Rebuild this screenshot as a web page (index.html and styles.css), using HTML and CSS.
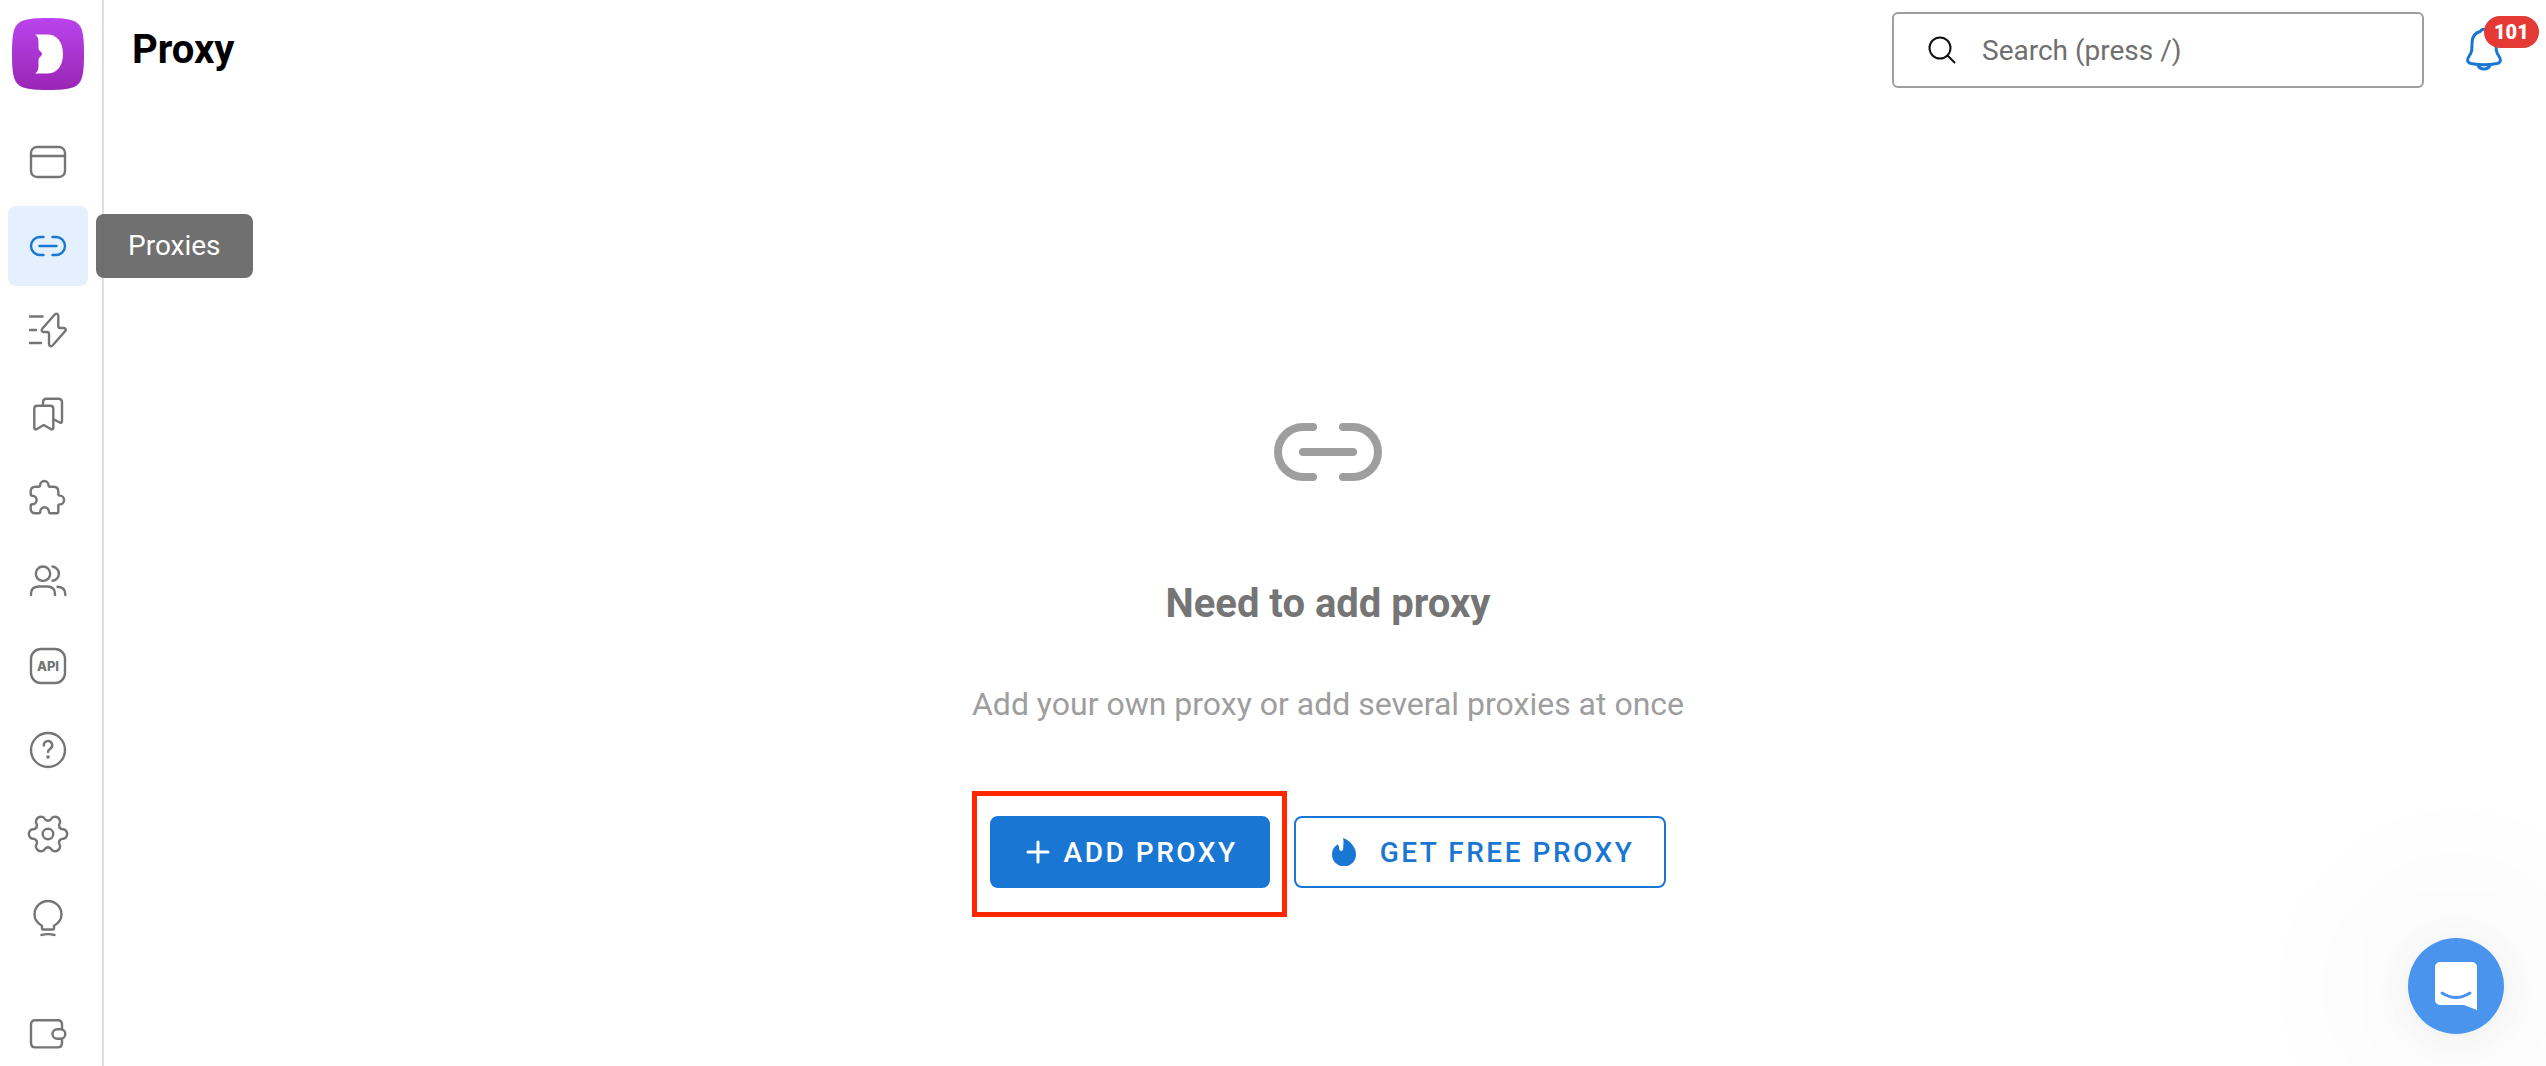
FILE: index.html
```html
<!DOCTYPE html>
<html lang="en">
<head>
  <meta charset="UTF-8" />
  <meta name="viewport" content="width=device-width, initial-scale=1.0"/>
  <title>Proxy</title>
  <link rel="stylesheet" href="styles.css">
</head>
<body>

  <!-- Sidebar -->
  <aside class="sidebar">
    <a class="logo" href="#" aria-label="Home">
      <svg viewBox="0 0 72 72">
        <defs>
          <linearGradient id="logoFill" x1="0" y1="0" x2="0" y2="1">
            <stop offset="0" stop-color="#b944ee"/>
            <stop offset="1" stop-color="#9a25b4"/>
          </linearGradient>
        </defs>
        <path fill="url(#logoFill)" d="M36 0C48 0 58 .5 64 4C71 8.500 72 18 72 36S71 63.500 64 68C58 71.500 48 72 36 72S14 71.500 8 68C1 63.500 0 54 0 36S1 8.500 8 4C14 .5 24 0 36 0z"/>
        <path fill="#fff" d="M23 16.500H35C45 16.500 51 24 51 36S45 55.500 35 55.500H23C26 53.500 26.500 51 26.500 47V42C26.500 39 30 38.500 30 36S26.500 33 26.500 30V25C26.500 21 26 18.500 23 16.500z"/>
      </svg>
    </a>

    <nav class="menu">
      <a class="menu-item" href="#profiles" aria-label="Browser profiles">
        <svg class="icon" viewBox="0 0 48 48"><rect x="7" y="9" width="34" height="30" rx="6"/><path d="M7 18h34"/></svg>
      </a>
      <a class="menu-item active" href="#proxies" aria-label="Proxies">
        <svg class="icon" viewBox="0 0 48 48"><path d="M19.500 15H16a9 9 0 0 0 0 18h3.500M28.500 15H32a9 9 0 0 1 0 18h-3.500M15.500 24h17"/></svg>
        <span class="tooltip">Proxies</span>
      </a>
      <a class="menu-item" href="#scripts" aria-label="Scripts">
        <svg class="icon" viewBox="0 0 48 48"><path d="M6 10.500h12.500M6 24h6M6 37h11M31 8.300c1.300-1.300 3.300-.5 3.300 1.400V20c0 1.200.8 2 2 2h3.500c1.800 0 2.600 1.700 1.500 3L28.500 39.500c-1.400 1.400-3.500.6-3.500-1.400V28c0-1.200-.7-2-2-2h-3.300c-1.800 0-2.700-1.800-1.500-3.200z"/></svg>
      </a>
      <a class="menu-item" href="#bookmarks" aria-label="Bookmarks">
        <svg class="icon" viewBox="0 0 48 48"><path d="M13.300 15.800h13c1.800 0 3 1.200 3 3V38c0 1.200-1.200 1.800-2.200 1.200L19.800 35l-7.300 4.200c-1 .6-2.200 0-2.200-1.200V18.800c0-1.800 1.200-3 3-3zM19 15.500v-3.200c0-2.200 1.300-3.500 3.500-3.500h12c2.200 0 3.500 1.300 3.500 3.500v19c0 1.200-1.200 1.900-2.200 1.200L30 29.500"/></svg>
      </a>
      <a class="menu-item" href="#extensions" aria-label="Extensions">
        <svg class="icon" viewBox="0 0 48 48"><path d="M11.500 12.700h3c1 0 1.600-.6 1.600-1.500a4.200 4.200 0 0 1 8.400 0c0 .9.600 1.500 1.600 1.500h3.400c3 0 4.800 1.800 4.800 4.800v2.600c0 1 .6 1.500 1.400 1.500a4.200 4.200 0 0 1 0 8.800c-.8 0-1.400.6-1.400 1.500v5.900c0 1-.6 1.500-1.500 1.500h-6.300c-1 0-1.600-.6-1.600-1.700a4.300 4.300 0 0 0-8.600 0c0 1.100-.6 1.700-1.600 1.700h-3.200c-3 0-4.800-1.800-4.800-4.800V31.800c0-1 .6-1.500 1.600-1.500a4.200 4.200 0 0 0 0-8.600c-1 0-1.600-.6-1.600-1.500v-2.700c0-3 1.800-4.800 4.800-4.800z"/></svg>
      </a>
      <a class="menu-item" href="#team" aria-label="Team">
        <svg class="icon" viewBox="0 0 48 48"><circle cx="19" cy="15.700" r="7.200"/><path d="M28.500 8.500a7.200 7.200 0 0 1 0 14.300M7 37v-1c0-5 3-7.500 8-7.500h8c5 0 8 2.500 8 7.500v1M33.500 28.700c5.500.3 7.700 3 7.800 7.300v1"/></svg>
      </a>
      <a class="menu-item" href="#api" aria-label="API">
        <svg class="icon" viewBox="0 0 48 48"><rect x="7" y="7" width="34" height="34" rx="10"/><text class="icon-text" x="24" y="29" text-anchor="middle">API</text></svg>
      </a>
      <a class="menu-item" href="#help" aria-label="Help">
        <svg class="icon" viewBox="0 0 48 48"><circle cx="24" cy="24" r="17"/><path d="M19.800 19.500a4.200 4.200 0 1 1 6.300 3.400c-1.300.8-2.100 1.600-2.100 3"/><circle class="fill" cx="24" cy="31" r="1.800"/></svg>
      </a>
      <a class="menu-item" href="#settings" aria-label="Settings">
        <svg class="icon" viewBox="0 0 48 48">
          <defs>
            <path id="tooth" d="M0-13.300C2-13.300 3-14.500 3.500-15.500C4.200-17.100 7.400-17.900 9.600-16.600S12.700-12.200 11.700-10.800C11.100-9.900 10.500-8.400 11.500-6.650"/>
          </defs>
          <g transform="translate(24 24)">
            <circle r="5.300"/>
            <use href="#tooth"/>
            <use href="#tooth" transform="rotate(60)"/>
            <use href="#tooth" transform="rotate(120)"/>
            <use href="#tooth" transform="rotate(180)"/>
            <use href="#tooth" transform="rotate(240)"/>
            <use href="#tooth" transform="rotate(300)"/>
          </g>
        </svg>
      </a>
      <a class="menu-item" href="#ideas" aria-label="Ideas">
        <svg class="icon" viewBox="0 0 48 48"><path d="M18 34.500v-2.800c-4.500-2.500-7.500-6.500-7.500-11.200a13.500 13.500 0 0 1 27 0c0 4.700-3 8.700-7.500 11.200v2.800c0 .6-.4 1-1 1H19c-.6 0-1-.4-1-1zM17.500 41q6.500-1.800 13 0"/></svg>
      </a>
      <a class="menu-item wallet" href="#wallet" aria-label="Wallet">
        <svg class="icon" viewBox="0 0 48 48"><path d="M38 19v-4.500c0-2.800-1.600-4.300-4.300-4.300H11.300C8.600 10.200 7 11.700 7 14.500v18.600c0 2.800 1.600 4.300 4.300 4.300h22.400c2.700 0 4.300-1.500 4.300-4.300V29"/><rect x="28.500" y="19.200" width="12.800" height="9.600" rx="4.800"/></svg>
      </a>
    </nav>
  </aside>

  <!-- Page -->
  <main class="page">
    <header class="topbar">
      <h1>Proxy</h1>
      <label class="search">
        <svg class="search-icon" viewBox="0 0 28 28"><circle cx="12" cy="12" r="10.500"/><path d="M19.500 19.500l7.500 7.500"/></svg>
        <input type="text" placeholder="Search (press /)" aria-label="Search">
      </label>
      <button class="bell" type="button" aria-label="Notifications">
        <svg viewBox="0 0 36 44"><path d="M18 1c-2 0-3 1.500-3.500 2.300C9 4.800 6 9 6 15c0 6.500 0 9-2.800 13C.6 32 1.200 34.500 5 35.500c7 1.300 19 1.300 26 0 3.800-1 4.400-3.500 1.800-7.500C30 24 30 21.500 30 15c0-6-3-10.200-8.500-11.700C21 2.500 20 1 18 1zM12 37c1.500 5.300 10.500 5.300 12 0"/></svg>
        <span class="badge">101</span>
      </button>
    </header>

    <section class="empty">
      <svg class="empty-icon" viewBox="0 0 144 144"><path d="M57 47H47a25 25 0 0 0 0 50h10M87 47h10a25 25 0 0 1 0 50H87M47 72h50"/></svg>
      <h2>Need to add proxy</h2>
      <p>Add your own proxy or add several proxies at once</p>
      <div class="actions">
        <button class="btn btn-primary" type="button">
          <svg class="plus" viewBox="0 0 24 24"><path d="M12 2v20M2 12h20"/></svg>
          ADD PROXY
        </button>
        <button class="btn btn-outline" type="button">
          <svg class="flame" viewBox="0 0 24 28"><path d="M11 0C18 2.500 24 9 24 16.500a12 12 0 0 1-24 0C0 12 2 8.500 5.800 6.200c1 1.200 1.200 2.800 1.300 4.300.1 1.500 1 2.500 2.200 2.500s1.900-1 1.900-2.500C11.200 7 12 3.500 11 0z"/></svg>
          GET FREE PROXY
        </button>
      </div>
    </section>
  </main>

  <!-- Chat launcher -->
  <button class="chat" type="button" aria-label="Open chat">
    <svg viewBox="0 0 42 48"><path class="bubble" d="M5 0h32a5 5 0 0 1 5 5v43l-13-5H5a5 5 0 0 1-5-5V5a5 5 0 0 1 5-5z"/><path class="smile" d="M7 31q14 9 28 0"/></svg>
  </button>

</body>
</html>
```

FILE: styles.css
```css
* {
  box-sizing: border-box;
}
body {
  margin: 0;
  height: 100vh;
  display: flex;
  overflow: hidden;
  font-family: Roboto, sans-serif;
  background: #fff;
  color: #000;
}
button {
  font-family: inherit;
  cursor: pointer;
}
svg {
  display: block;
}

/* sidebar */
.sidebar {
  flex: none;
  width: 104px;
  padding: 18px 8px 0;
  border-right: 2px solid #e0e0e0;
}
.logo {
  display: block;
  width: 72px;
  margin: 0 4px 32px;
}
.menu {
  display: flex;
  flex-direction: column;
  gap: 4px;
}
.menu-item {
  position: relative;
  display: flex;
  align-items: center;
  justify-content: center;
  width: 80px;
  height: 80px;
  border-radius: 8px;
  color: #757575;
}
.menu-item.active {
  background: #e4f0fd;
  color: #1976d2;
}
.wallet {
  margin-top: 32px;
}
.icon {
  width: 48px;
  height: 48px;
  fill: none;
  stroke: currentColor;
  stroke-width: 2.4;
  stroke-linecap: round;
  stroke-linejoin: round;
}
.icon .fill {
  fill: currentColor;
  stroke: none;
}
.icon-text {
  font: 800 13px Inter, sans-serif;
  fill: currentColor;
  stroke: none;
}
.tooltip {
  position: absolute;
  left: 88px;
  top: 8px;
  padding: 0 32px;
  border-radius: 8px;
  background: rgba(97, 97, 97, 0.9);
  color: #fff;
  font-size: 28px;
  line-height: 64px;
  z-index: 1;
}

/* page */
.page {
  flex: 1;
  padding: 12px 22px 0 28px;
}
.topbar {
  display: flex;
  align-items: center;
  height: 76px;
}
h1 {
  margin: 0 auto 0 0;
  font-size: 40px;
  line-height: 48px;
}
.search {
  display: flex;
  align-items: center;
  gap: 26px;
  width: 532px;
  height: 76px;
  padding: 0 32px 0 34px;
  border: 2px solid #9e9e9e;
  border-radius: 6px;
}
.search-icon {
  flex: none;
  width: 28px;
  height: 28px;
  fill: none;
  stroke: #111;
  stroke-width: 2;
}
.search input {
  flex: 1;
  min-width: 0;
  padding: 0;
  border: 0;
  outline: 0;
  background: none;
  font: 28px Roboto, sans-serif;
}
.search input::placeholder {
  color: #6f6f6f;
}
.bell {
  position: relative;
  width: 36px;
  margin: 0 22px 0 42px;
  padding: 0;
  border: 0;
  background: none;
}
.bell svg {
  fill: none;
  stroke: #1976d2;
  stroke-width: 3;
}
.badge {
  position: absolute;
  left: 18px;
  top: -12px;
  padding: 0 10px;
  border-radius: 16px;
  background: #e53935;
  color: #fff;
  font-size: 20px;
  font-weight: 900;
  line-height: 32px;
}

/* empty state */
.empty {
  display: flex;
  flex-direction: column;
  align-items: center;
  padding-top: 292px;
}
.empty-icon {
  width: 144px;
  height: 144px;
  fill: none;
  stroke: #9e9e9e;
  stroke-width: 8;
  stroke-linecap: round;
}
h2 {
  margin: 56px 0;
  font-size: 40px;
  line-height: 48px;
  color: #757575;
}
.empty p {
  margin: 0 0 92px;
  font-size: 32px;
  line-height: 40px;
  color: #9e9e9e;
}
.actions {
  display: flex;
  gap: 24px;
}
.btn {
  position: relative;
  display: flex;
  align-items: center;
  height: 72px;
  padding: 0 30px 0 36px;
  border: 2px solid #1976d2;
  border-radius: 8px;
  font-size: 28px;
  font-weight: 500;
  letter-spacing: 0.09em;
}
.btn-primary {
  gap: 14px;
  padding: 0 30px 0 34px;
  background: #1976d2;
  color: #fff;
}
/* highlight frame around the main action */
.btn-primary::after {
  content: "";
  position: absolute;
  inset: -27px -19px -31px -20px;
  border: 5px solid #ff2600;
}
.btn-outline {
  gap: 24px;
  background: #fff;
  color: #1976d2;
}
.plus {
  width: 24px;
  height: 24px;
  stroke: #fff;
  stroke-width: 3;
  stroke-linecap: round;
}
.flame {
  width: 24px;
  height: 28px;
  fill: #1976d2;
}

/* chat */
.chat {
  position: fixed;
  right: 42px;
  bottom: 32px;
  display: flex;
  align-items: center;
  justify-content: center;
  width: 96px;
  height: 96px;
  padding: 0;
  border: 0;
  border-radius: 50%;
  background: #4a94ed;
  box-shadow: 0 2px 12px rgba(0, 0, 0, 0.03), 0 4px 64px rgba(0, 0, 0, 0.06), 0 0 160px 60px rgba(0, 0, 0, 0.03);
}
.chat svg {
  width: 42px;
  height: 48px;
}
.bubble {
  fill: #fff;
}
.smile {
  fill: none;
  stroke: #4a94ed;
  stroke-width: 3;
  stroke-linecap: round;
}
```
